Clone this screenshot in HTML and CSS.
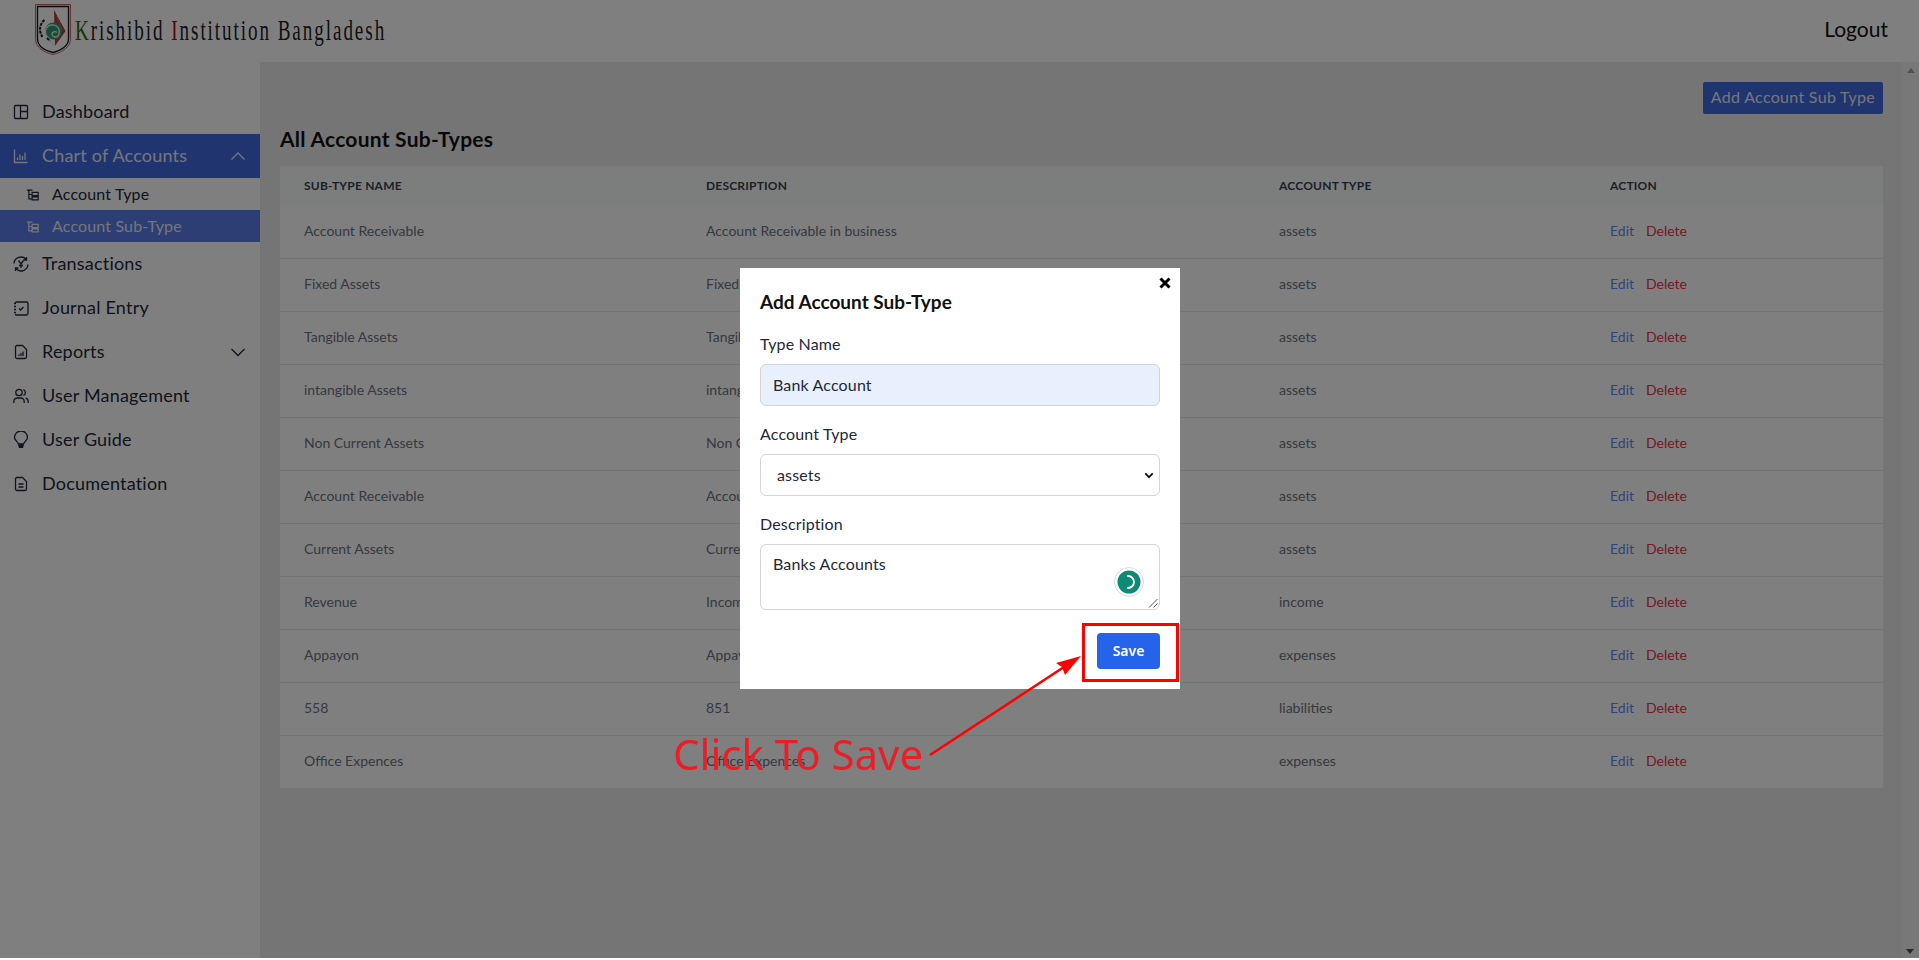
FILE: index.html
```html
<!DOCTYPE html>
<html lang="en">
<head>
<meta charset="utf-8">
<title>Account Sub-Types</title>
<link rel="stylesheet" href="styles.css">
</head>
<body>
<div class="app">
  <header class="topbar">
    <div class="brand">
      <svg class="logo" viewBox="0 0 36 51" width="36" height="51" fill="none">
        <path d="M.5.500h35v34c0 9-9 14-17.500 16C9 48.500.5 43.500.5 34.500z" stroke="#c06060" stroke-width="1"/>
        <path d="M2.500 2.500h31v32c0 8-8 12-15.500 14C10 46.500 2.500 42.500 2.500 34.500z" stroke="#151515" stroke-width="1.300"/>
        <path d="M19 6l11.500 21L20 42z" fill="#b03a3a"/>
        <path d="M22 12l5 15-6 10" stroke="#e8b0b0" stroke-width=".8" stroke-dasharray="1.500 1.500"/>
        <circle cx="18.500" cy="27" r="8.500" fill="#2f9a72"/>
        <path d="M19 42l-5-8a7 7 0 1 1 9-2c-2 2-6 1-6-2a3 3 0 0 1 5-1.500" stroke="#e4eee8" stroke-width="1.400"/>
        <path d="M9.500 16c-5 4-6 11-2 17M12 34l3 3" stroke="#1c1c1c" stroke-width="2" stroke-dasharray="3 1"/>
      </svg>
      <span class="wordmark"><span class="k">K</span>rishibid <span class="i">I</span>nstitution Bangladesh</span>
    </div>
    <a class="logout">Logout</a>
  </header>
  <div class="body">
    <nav class="sidebar">
      <a class="nav"><svg class="ic" viewBox="0 0 16 16"><path d="M2.500 1.500h11a1 1 0 0 1 1 1v11a1 1 0 0 1-1 1h-11a1 1 0 0 1-1-1v-11a1 1 0 0 1 1-1zM7.500 1.500v13M7.500 7.500h7"/></svg><span class="lab">Dashboard</span></a>
      <a class="nav active"><svg class="ic" viewBox="0 0 16 16"><path d="M1.500 1.500v13h13M4.500 12V9.500M7 12V6.500M9.500 12V8M12 12V4.500"/></svg><span class="lab">Chart of Accounts</span><svg class="chev" viewBox="0 0 16 16"><path d="M1.500 11.500L8 5l6.500 6.500"/></svg></a>
      <a class="sub"><svg class="ic ic-sm" viewBox="0 0 16 16"><path d="M1 2.500h7M3.500 2.500v11H7M3.500 8H7M7.500 5.500H15v4H7.500zM7.500 11H15v3.500H7.500z"/></svg><span class="lab">Account Type</span></a>
      <a class="sub current"><svg class="ic ic-sm" viewBox="0 0 16 16"><path d="M1 2.500h7M3.500 2.500v11H7M3.500 8H7M7.500 5.500H15v4H7.500zM7.500 11H15v3.500H7.500z"/></svg><span class="lab">Account Sub-Type</span></a>
      <a class="nav"><svg class="ic" viewBox="0 0 16 16"><path d="M1 7.500A7 7 0 0 1 13 3.200M15 8.500A7 7 0 0 1 3 12.800M13.500 1v3h-3M2.500 15v-3h3M5.500 4.500L8 8l2.500-3.500M8 8v4M6 9.500h4"/></svg><span class="lab">Transactions</span></a>
      <a class="nav"><svg class="ic" viewBox="0 0 16 16"><path d="M2.500 2h11a1.500 1.500 0 0 1 1.500 1.500v10a1.500 1.500 0 0 1-1.500 1.500h-11M1 3.500h2M1 6.500h2M1 9.500h2M1 12.500h2M2.500 2v1M2.500 14v1M6 8.500l1.500 1.500 3-3"/></svg><span class="lab">Journal Entry</span></a>
      <a class="nav"><svg class="ic" viewBox="0 0 16 16"><path d="M4 1.500h5.500L13.500 5.500v7.500a1.500 1.500 0 0 1-1.500 1.500H4A1.500 1.500 0 0 1 2.500 13V3A1.500 1.500 0 0 1 4 1.500zM6 12v-1.500M8 12V9M10 12V7.500"/></svg><span class="lab">Reports</span><svg class="chev" viewBox="0 0 16 16"><path d="M1.500 5L8 11.500 14.500 5"/></svg></a>
      <a class="nav"><svg class="ic" viewBox="0 0 16 16"><circle cx="6" cy="4.500" r="3.200"/><path d="M.8 15v-1.500A3.500 3.500 0 0 1 4.300 10h3.400a3.500 3.500 0 0 1 3.500 3.500V15M10.300 1.500a3.200 3.200 0 0 1 0 6M12.700 10.200a3.500 3.500 0 0 1 2.500 3.300V15"/></svg><span class="lab">User Management</span></a>
      <a class="nav"><svg class="ic ic-bulb" viewBox="0 0 16 18"><path d="M5.500 13C5 11 1.500 9 1.500 6.500a6.500 6.500 0 0 1 13 0c0 2.500-3.500 4.500-4 6.500z"/><path class="bulb-base" d="M5.200 14.200h5.600M5.800 16h4.400"/></svg><span class="lab">User Guide</span></a>
      <a class="nav"><svg class="ic" viewBox="0 0 16 16"><path d="M4 1.500h5.500L13.500 5.500v7.500a1.500 1.500 0 0 1-1.500 1.500H4A1.500 1.500 0 0 1 2.500 13V3A1.500 1.500 0 0 1 4 1.500zM5.500 8h5M5.500 11h5"/></svg><span class="lab">Documentation</span></a>
    </nav>
    <main class="main">
      <div class="toolbar"><button class="add">Add Account Sub Type</button></div>
      <h2 class="title">All Account Sub-Types</h2>
      <table class="grid">
        <colgroup><col class="c1"><col class="c2"><col class="c3"><col class="c4"></colgroup>
        <thead><tr><th>Sub-Type Name</th><th>Description</th><th>Account Type</th><th>Action</th></tr></thead>
        <tbody>
          <tr><td>Account Receivable</td><td>Account Receivable in business</td><td>assets</td><td><a class="edit">Edit</a><a class="del">Delete</a></td></tr>
          <tr><td>Fixed Assets</td><td>Fixed Assets</td><td>assets</td><td><a class="edit">Edit</a><a class="del">Delete</a></td></tr>
          <tr><td>Tangible Assets</td><td>Tangible Assets</td><td>assets</td><td><a class="edit">Edit</a><a class="del">Delete</a></td></tr>
          <tr><td>intangible Assets</td><td>intangible Assets</td><td>assets</td><td><a class="edit">Edit</a><a class="del">Delete</a></td></tr>
          <tr><td>Non Current Assets</td><td>Non Current Assets</td><td>assets</td><td><a class="edit">Edit</a><a class="del">Delete</a></td></tr>
          <tr><td>Account Receivable</td><td>Account Receivable</td><td>assets</td><td><a class="edit">Edit</a><a class="del">Delete</a></td></tr>
          <tr><td>Current Assets</td><td>Current Assets</td><td>assets</td><td><a class="edit">Edit</a><a class="del">Delete</a></td></tr>
          <tr><td>Revenue</td><td>Income</td><td>income</td><td><a class="edit">Edit</a><a class="del">Delete</a></td></tr>
          <tr><td>Appayon</td><td>Appayon</td><td>expenses</td><td><a class="edit">Edit</a><a class="del">Delete</a></td></tr>
          <tr><td>558</td><td>851</td><td>liabilities</td><td><a class="edit">Edit</a><a class="del">Delete</a></td></tr>
          <tr><td>Office Expences</td><td>Office Expences</td><td>expenses</td><td><a class="edit">Edit</a><a class="del">Delete</a></td></tr>
        </tbody>
      </table>
    </main>
    <div class="scrollbar"><span class="arrow-up"></span><span class="arrow-down"></span></div>
  </div>
</div>

<div class="overlay"></div>

<section class="modal">
  <svg class="close" viewBox="0 0 12 12" width="12" height="12"><path d="M1.500 1.500l9 9M10.500 1.500l-9 9"/></svg>
  <h3 class="modal-title">Add Account Sub-Type</h3>
  <label class="lbl">Type Name</label>
  <div class="field filled">Bank Account</div>
  <label class="lbl">Account Type</label>
  <div class="field select">assets<svg class="caret" viewBox="0 0 12 8"><path d="M1.500 1.500L6 6l4.500-4.500"/></svg></div>
  <label class="lbl">Description</label>
  <div class="field area">Banks Accounts
    <span class="spinner"><svg viewBox="0 0 30 30" width="30" height="30"><circle cx="15" cy="15" r="14.500" fill="#fff" stroke="#d5dde0"/><circle cx="15" cy="15" r="11.500" fill="#0d8a76"/><path d="M14 9a6 6 0 0 1 0 12" fill="none" stroke="#fff" stroke-width="1.800" stroke-linecap="round"/></svg></span>
    <svg class="grip" viewBox="0 0 10 10"><path d="M9.500 1L1 9.500M9.500 5.500L5.500 9.500"/></svg>
  </div>
  <div class="actions"><button class="save">Save</button></div>
</section>

<div class="callout-box"></div>
<svg class="arrow-line" viewBox="0 0 156 106" width="156" height="106">
  <path d="M1 103L138 13" stroke="#f00" stroke-width="2.600" fill="none"/>
  <path d="M152 4L127 11L133 15L136 23z" fill="#f00"/>
</svg>
<span class="callout-text">Click To Save</span>
</body>
</html>
```
FILE: styles.css
```css
* { box-sizing: border-box; }
html, body { margin: 0; height: 100%; overflow: hidden; }
body { font-family: Lato, "Noto Sans", sans-serif; color: #111827; background: #fff; }
button { font-family: inherit; border: 0; cursor: pointer; }

.app { display: flex; flex-direction: column; height: 958px; }
.topbar { flex: 0 0 62px; display: flex; align-items: center; justify-content: space-between; background: #fff; padding: 0 31px 0 35px; }
.brand { display: flex; align-items: center; gap: 4px; height: 62px; }
.logo { flex: none; margin-top: -3px; }
.wordmark { font-family: "Liberation Serif", serif; font-size: 30px; letter-spacing: 3px; white-space: pre; transform: scaleX(.638); transform-origin: left center; color: #222; margin-top: -2px; }
.k { color: #2c6e00; }
.i { color: #c00; }
.logout { font-size: 21px; color: #111; margin-top: -6px; }

.body { flex: 1; display: flex; min-height: 0; }
.sidebar { flex: 0 0 260px; background: #fff; padding-top: 28px; }
.nav { display: flex; align-items: center; height: 44px; padding: 0 14px; font-size: 18px; letter-spacing: .2px; color: #1e293b; white-space: nowrap; }
.nav.active { background: #4169e1; color: #e8ecf5; }
.sub { display: flex; align-items: center; height: 32px; padding: 0 0 0 26px; font-size: 16px; letter-spacing: .15px; color: #1e293b; }
.sub.current { background: #5a7ce8; color: #e8ecf5; }
.ic { width: 16px; height: 16px; flex: none; margin-right: 12px; margin-left: -1px; fill: none; stroke: currentColor; stroke-width: 1.300; }
.ic-sm { width: 13px; height: 13px; margin-left: 0; margin-right: 12px; stroke-width: 1.500; }
.ic-bulb { height: 18px; }
.bulb-base { stroke-width: 2; }
.lab { display: block; margin-left: 1px; padding-bottom: 2px; }
.chev { width: 16px; height: 16px; margin-left: auto; fill: none; stroke: currentColor; stroke-width: 1.300; }

.main { flex: 1; min-width: 0; background: #ebebeb; padding: 20px 19px 0 20px; }
.toolbar { display: flex; justify-content: flex-end; }
.add { height: 32px; padding: 0 8px 3px; background: #4169e1; color: #e8ecf5; font-size: 16px; letter-spacing: .3px; border-radius: 2px; }
.title { margin: 10px 0 0; height: 42px; font-size: 21px; font-weight: 700; letter-spacing: .25px; line-height: 30px; color: #111; }
.grid { width: 100%; table-layout: fixed; border-collapse: collapse; background: #fff; }
.c1 { width: 402px; } .c2 { width: 573px; } .c3 { width: 331px; }
th { height: 39px; padding: 0 24px; text-align: left; font-size: 12px; font-weight: 700; text-transform: uppercase; color: #374151; background: #f9fdfb; letter-spacing: .2px; }
td { height: 53px; padding: 0 24px 2px; font-size: 14px; color: #6b7280; border-bottom: 1px solid #e5e7eb; }
.edit { color: #5f85f5; margin-right: 12px; }
.del { color: #e8324a; }

.scrollbar { flex: 0 0 17px; background: #f1f1f1; position: relative; }
.arrow-up { position: absolute; top: 6px; left: 5px; border: 4px solid transparent; border-top: 0; border-bottom: 5px solid #a0a0a0; }
.arrow-down { position: absolute; bottom: 4px; left: 4px; border: 4px solid transparent; border-bottom: 0; border-top: 5px solid #505050; }

.overlay { position: fixed; inset: 0 0 2px 0; background: rgba(0,0,0,.5); }

.modal { position: fixed; left: 740px; top: 268px; width: 440px; height: 421px; background: #fff; padding: 20px 20px 0; color: #1f2937; }
.close { position: absolute; right: 9px; top: 9px; fill: none; stroke: #000; stroke-width: 3; }
.modal-title { margin: 0 0 16px; font-size: 19px; font-weight: 700; line-height: 28px; color: #111; }
.lbl { display: block; font-size: 16px; letter-spacing: .15px; line-height: 24px; margin-bottom: 8px; color: #1f2937; }
.field { height: 42px; border: 1px solid #d1d5db; border-radius: 6px; padding: 0 12px 2px; font-size: 16px; letter-spacing: .15px; display: flex; align-items: center; margin-bottom: 16px; color: #1f2937; position: relative; }
.filled { background: #e8f0fe; }
.select { padding-left: 16px; justify-content: space-between; padding-right: 0; }
.caret { width: 10px; height: 7px; fill: none; stroke: #111; stroke-width: 2.200; margin-right: 5px; margin-top: 2px; }
.area { height: 66px; align-items: flex-start; padding-top: 9px; margin-bottom: 0; }
.spinner { position: absolute; right: 15px; top: 22px; width: 30px; height: 30px; }
.grip { position: absolute; right: 1px; bottom: 1px; width: 10px; height: 10px; fill: none; stroke: #555; stroke-width: 1; }
.actions { display: flex; justify-content: flex-end; margin-top: 23px; }
.save { width: 63px; height: 36px; border-radius: 4px; background: #2563eb; color: #fff; font-family: "Noto Sans", sans-serif; font-size: 14px; font-weight: 600; padding-bottom: 2px; }

.callout-box { position: fixed; left: 1082px; top: 623px; width: 97px; height: 59px; border: 3px solid #f00; }
.arrow-line { position: fixed; left: 929px; top: 652px; }
.callout-text { position: fixed; left: 673px; top: 727px; font-family: "Noto Sans", sans-serif; font-size: 42px; line-height: 54px; color: #ee1c25; white-space: nowrap; }
```
